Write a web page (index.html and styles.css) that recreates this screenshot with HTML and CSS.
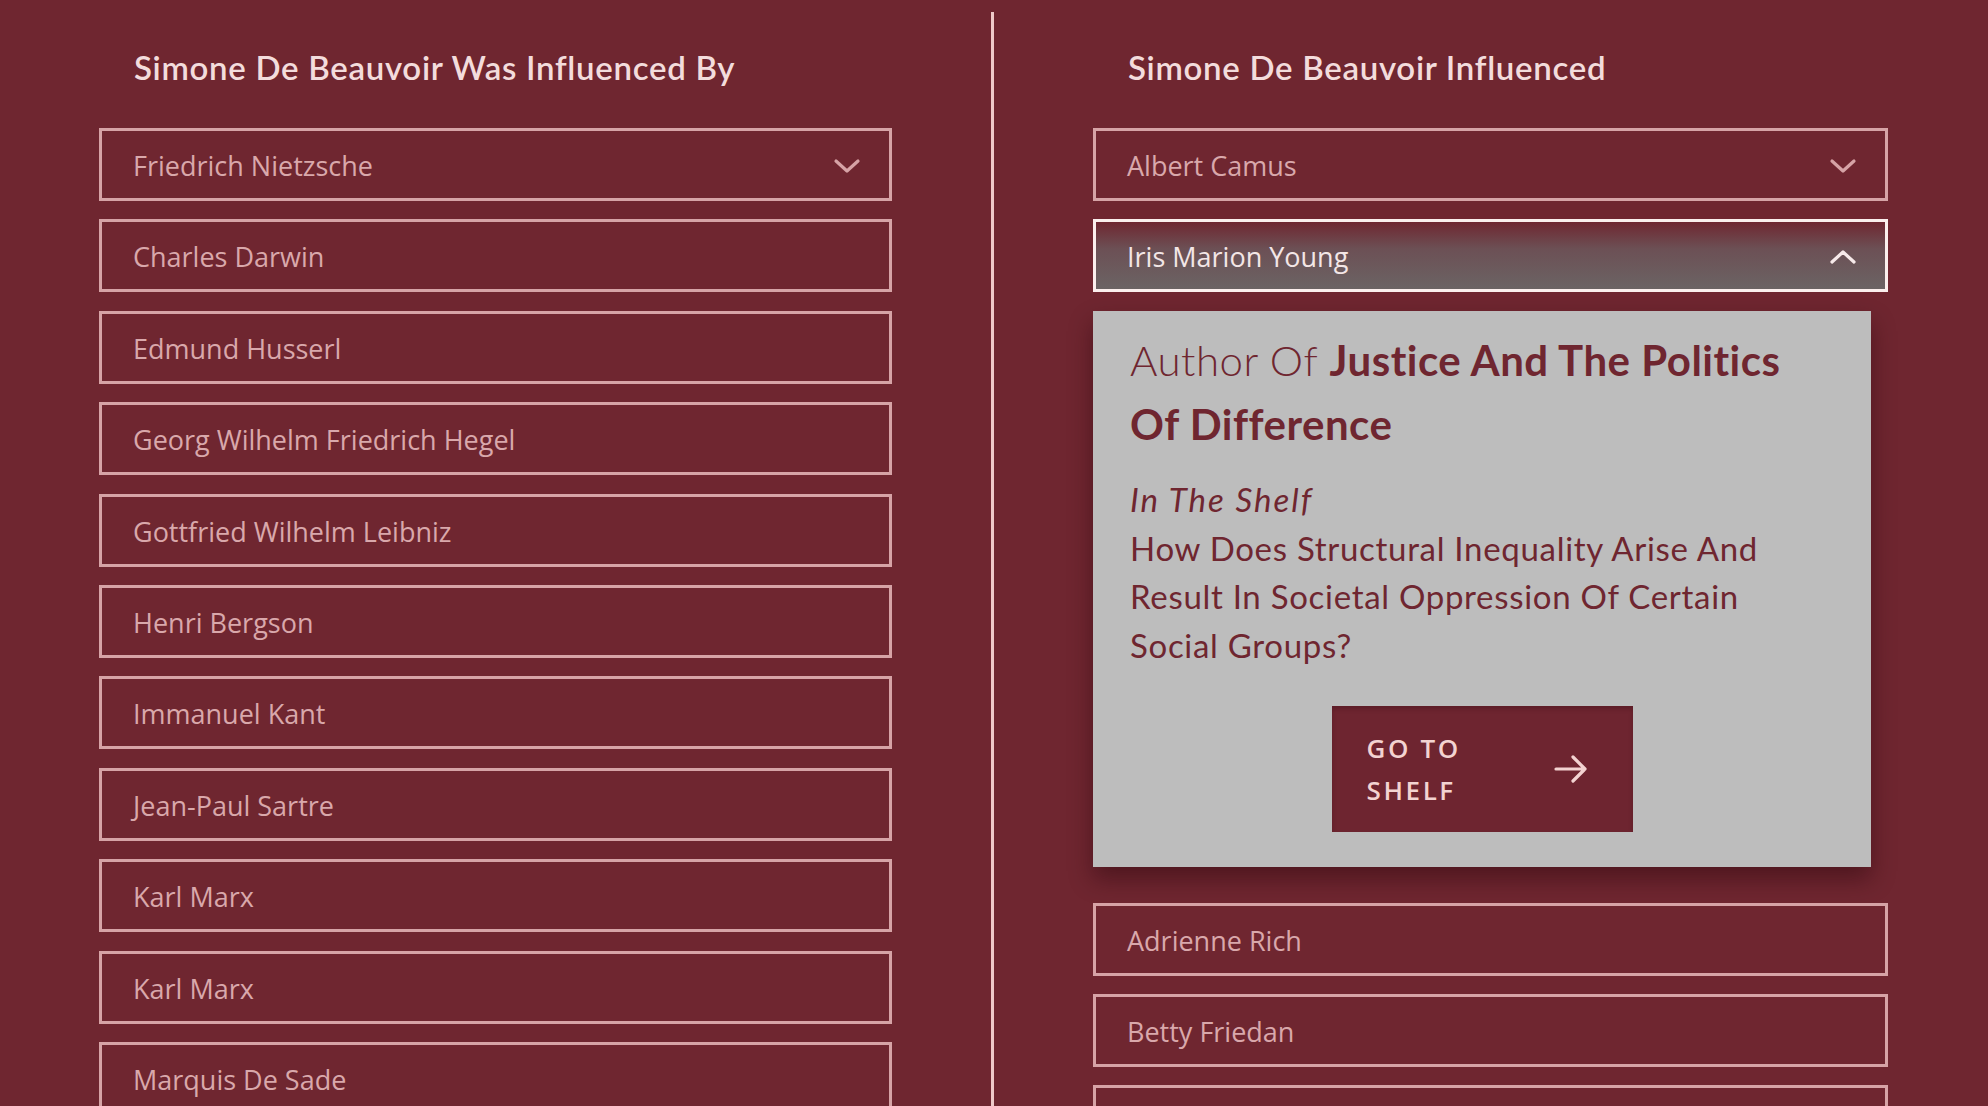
FILE: index.html
```html
<!DOCTYPE html>
<html lang="en">
<head>
<meta charset="utf-8">
<title>Simone De Beauvoir</title>
<link rel="stylesheet" href="styles.css">
</head>
<body>
<main class="page">
  <section class="col">
    <h2 class="col-title">Simone De Beauvoir Was Influenced By</h2>
    <ul class="list">
      <li class="item item-select"><span>Friedrich Nietzsche</span>
        <svg class="chev" viewBox="0 0 28 16" width="28" height="16"><path d="M3 3 L14 13 L25 3" fill="none" stroke="currentColor" stroke-width="3.2" stroke-linecap="round" stroke-linejoin="round"/></svg>
      </li>
      <li class="item"><span>Charles Darwin</span></li>
      <li class="item"><span>Edmund Husserl</span></li>
      <li class="item"><span>Georg Wilhelm Friedrich Hegel</span></li>
      <li class="item"><span>Gottfried Wilhelm Leibniz</span></li>
      <li class="item"><span>Henri Bergson</span></li>
      <li class="item"><span>Immanuel Kant</span></li>
      <li class="item"><span>Jean-Paul Sartre</span></li>
      <li class="item"><span>Karl Marx</span></li>
      <li class="item"><span>Karl Marx</span></li>
      <li class="item"><span>Marquis De Sade</span></li>
    </ul>
  </section>
  <div class="divider"></div>
  <section class="col">
    <h2 class="col-title">Simone De Beauvoir Influenced</h2>
    <ul class="list">
      <li class="item item-select"><span>Albert Camus</span>
        <svg class="chev" viewBox="0 0 28 16" width="28" height="16"><path d="M3 3 L14 13 L25 3" fill="none" stroke="currentColor" stroke-width="3.2" stroke-linecap="round" stroke-linejoin="round"/></svg>
      </li>
      <li class="item item-open"><span>Iris Marion Young</span>
        <svg class="chev" viewBox="0 0 28 16" width="28" height="16"><path d="M3 13 L14 3 L25 13" fill="none" stroke="currentColor" stroke-width="3.2" stroke-linecap="round" stroke-linejoin="round"/></svg>
      </li>
      <li class="panel">
        <p class="panel-title"><span class="light">Author Of</span> <strong>Justice And The Politics Of Difference</strong></p>
        <p class="panel-label">In The Shelf</p>
        <p class="panel-body">How Does Structural Inequality Arise And Result In Societal Oppression Of Certain Social Groups?</p>
        <div class="panel-actions">
          <a class="btn" href="#"><span class="btn-text">GO TO<br>SHELF</span>
            <svg class="arrow" viewBox="0 0 36 30" width="36" height="30"><path d="M3 15 H32 M20 3 L32 15 L20 27" fill="none" stroke="currentColor" stroke-width="3.2" stroke-linecap="round" stroke-linejoin="round"/></svg>
          </a>
        </div>
      </li>
      <li class="item"><span>Adrienne Rich</span></li>
      <li class="item"><span>Betty Friedan</span></li>
      <li class="item"><span>Catharine MacKinnon</span></li>
    </ul>
  </section>
</main>
</body>
</html>
```

FILE: styles.css
```css
* { box-sizing: border-box; }
html, body {
  margin: 0;
  padding: 0;
  height: 100%;
  overflow: hidden;
  background: #6f2630;
}
.page {
  display: grid;
  grid-template-columns: 991px 3px 1fr;
  height: 1106px;
  overflow: hidden;
}
.col {
  padding: 0 99px;
  min-width: 0;
}
.col:last-child {
  padding: 0 100px 0 99px;
}
.divider {
  margin-top: 12px;
  background: #efc9c9;
}
.col-title {
  margin: 0;
  padding: 47px 0 0 35px;
  height: 128px;
  font-family: "Lato", "Noto Sans", sans-serif;
  font-weight: 600;
  font-size: 33px;
  line-height: 40px;
  color: #f3dcdc;
  letter-spacing: 0.7px;
  white-space: nowrap;
}
.list {
  list-style: none;
  margin: 0;
  padding: 0;
  display: flex;
  flex-direction: column;
  gap: 18.4px;
}
.item {
  height: 73px;
  flex: 0 0 73px;
  border: 3px solid #d6a3a6;
  display: flex;
  align-items: center;
  justify-content: space-between;
  padding: 2px 28px 0 31px;
  font-family: "Open Sans", "Noto Sans", sans-serif;
  font-size: 27px;
  color: #d9a8ab;
  letter-spacing: 0;
}
.chev {
  color: #d6a3a6;
  display: block;
}
.item-open {
  border-color: #fbefed;
  background: linear-gradient(to bottom, #6f2731 0%, #6c5055 40%, #6b6464 100%);
  color: #f3e6e6;
}
.item-open .chev { color: #f7eaea; }
.panel {
  width: 778px;
  background: #bdbdbd;
  padding: 17px 37px 35px 37px;
  margin-bottom: 17px;
  box-shadow: 0 12px 22px rgba(40, 5, 10, 0.45);
  color: #6f2630;
  font-family: "Lato", "Noto Sans", sans-serif;
}
.panel p { margin: 0; }
.panel-title {
  max-width: 672px;
  font-size: 42px;
  line-height: 64px;
  letter-spacing: 0.5px;
  color: #6f2630;
}
.panel-title .light { font-weight: 300; }
.panel-title strong { font-weight: 700; }
.panel .panel-label {
  margin-top: 19px;
  font-style: italic;
  font-size: 33px;
  line-height: 49px;
  letter-spacing: 2px;
}
.panel-body {
  font-size: 33px;
  line-height: 48.5px;
  letter-spacing: 0.7px;
}
.panel-actions {
  display: flex;
  justify-content: center;
  margin-top: 37px;
}
.btn {
  width: 301px;
  height: 126px;
  background: #6e2530;
  box-shadow: inset 0 3px 4px rgba(40, 5, 10, 0.25);
  display: flex;
  align-items: center;
  justify-content: space-between;
  padding: 0 44px 0 35px;
  text-decoration: none;
  color: #f3d3d1;
  font-family: "Open Sans", "Noto Sans", sans-serif;
  font-weight: 600;
  font-size: 26px;
  line-height: 42px;
  letter-spacing: 2.6px;
}
.arrow { display: block; }
```
